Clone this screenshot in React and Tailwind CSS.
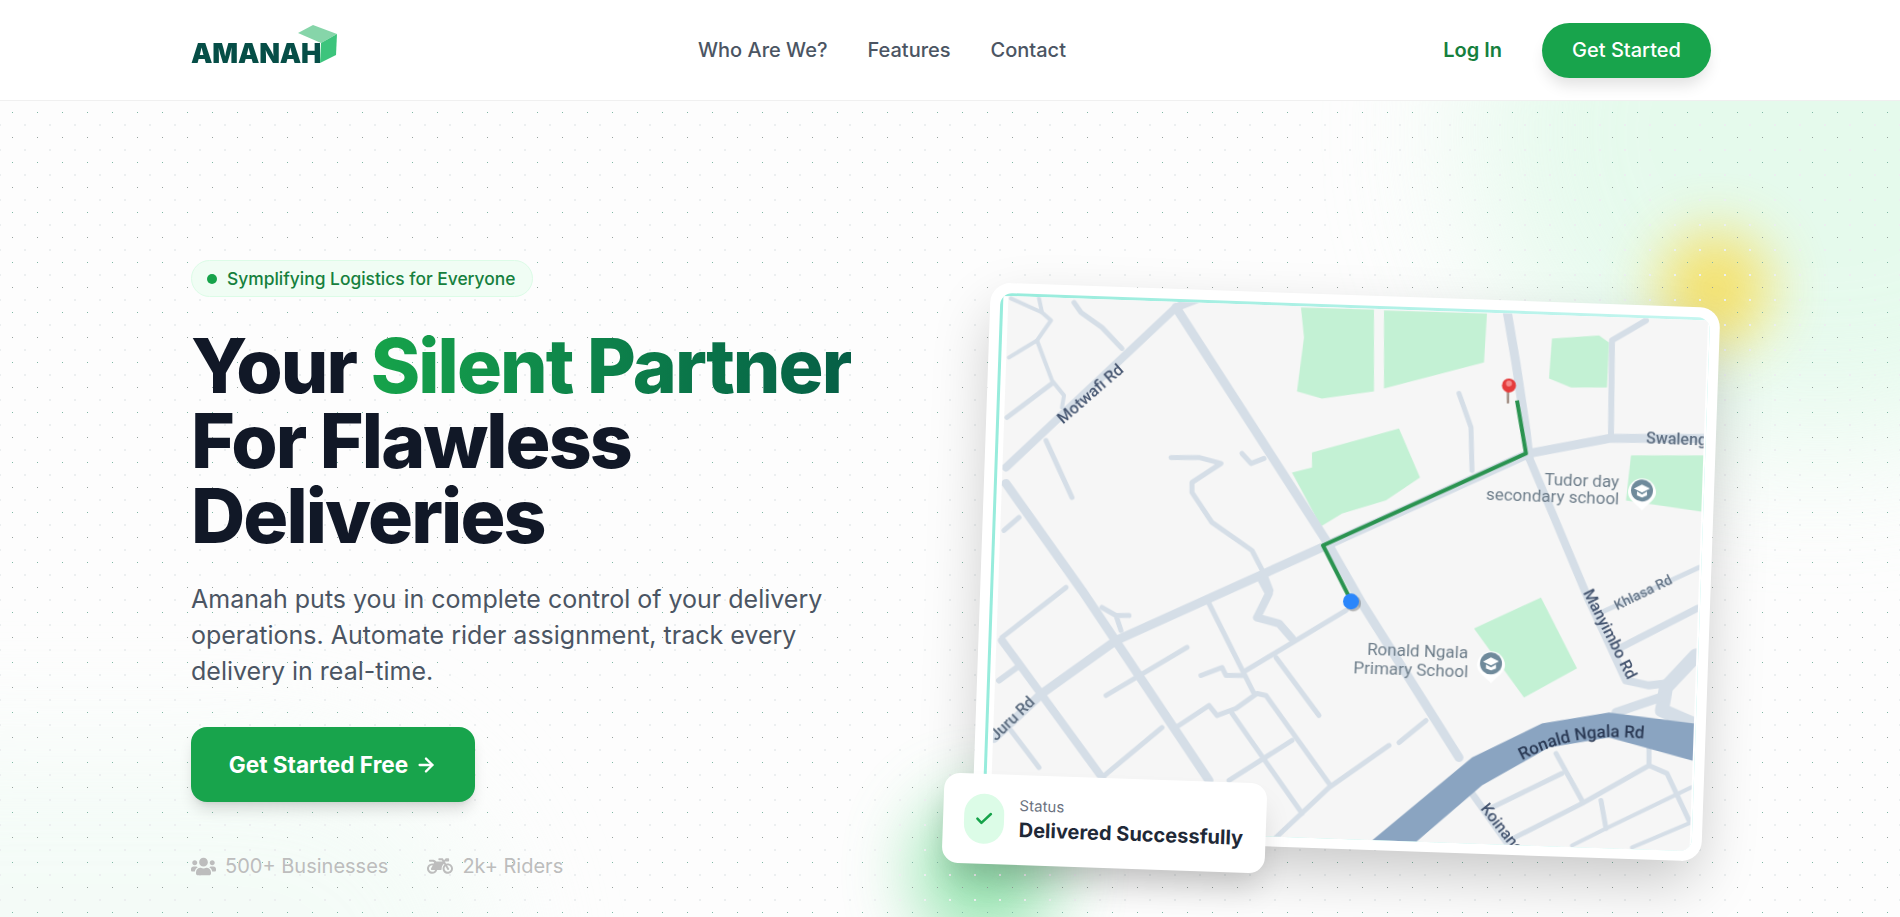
import { ArrowRight, Check } from "lucide-react";
import { FaUsers, FaMotorcycle } from "react-icons/fa";

// map drawing, all points are page coordinates of the picture
const roads = [
  { w: 9, d: "M1177 307L1327 540L1363 603L1460 757" },
  { w: 7, d: "M1473 793L1510 845" },
  { w: 8, d: "M1200 298L1177 307L1007 467" },
  { w: 9, d: "M1705 438L1610 438L1530 453L1323 547L1117 640L1043 693L995 738" },
  { w: 9, d: "M1007 483L1083 590L1210 780" },
  { w: 8, d: "M1003 640L1103 777" },
  { w: 5, d: "M1003 637L1067 587" },
  { w: 6, d: "M1000 680L1018 667" },
  { w: 5, d: "M1012 730L1040 767" },
  { w: 5, d: "M1103 777L1163 727" },
  { w: 5, d: "M1177 727L1210 705L1218 715L1237 708L1258 693L1267 695L1330 783" },
  { w: 5, d: "M1107 695L1188 647" },
  { w: 5, d: "M1233 713L1303 813" },
  { w: 5, d: "M1230 780L1293 740" },
  { w: 5, d: "M1277 837L1330 787L1390 745" },
  { w: 5, d: "M1400 742L1427 720" },
  { w: 5, d: "M1210 603L1255 693" },
  { w: 5, d: "M1247 670L1347 610" },
  { w: 5, d: "M1277 657L1320 715" },
  { w: 5, d: "M1202 675L1223 667L1227 675L1245 675" },
  { w: 5, d: "M1103 607L1117 615L1122 630M1117 615L1130 615" },
  { w: 8, d: "M1263 580L1270 593L1258 617L1280 623L1293 638" },
  { w: 5, d: "M1172 457L1200 457L1222 463L1193 482L1193 492L1213 522L1253 550L1267 577L1272 590" },
  { w: 5, d: "M1243 453L1252 463L1265 458" },
  { w: 4, d: "M1012 298L1043 312L1052 320L1038 340L1010 357" },
  { w: 4, d: "M1038 340L1053 380L1065 395L1063 407" },
  { w: 5, d: "M1053 383L1008 417" },
  { w: 5, d: "M1075 302L1082 312L1103 327L1123 348" },
  { w: 4, d: "M1040 298L1043 312" },
  { w: 5, d: "M1047 440L1073 497" },
  { w: 5, d: "M1020 517L1005 530" },
  { w: 9, d: "M1508 310L1517 363L1527 430L1530 457" },
  { w: 8, d: "M1530 457L1590 600L1627 680L1650 685L1667 683" },
  { w: 5, d: "M1460 393L1472 427L1473 470" },
  { w: 6, d: "M1647 320L1613 340L1612 433" },
  { w: 5, d: "M1700 567L1600 613" },
  { w: 7, d: "M1698 608L1620 648" },
  { w: 14, d: "M1697 655L1667 687L1663 710L1693 723" },
  { w: 9, d: "M1667 695L1617 712" },
  { w: 5, d: "M1493 807L1563 773" },
  { w: 5, d: "M1557 753L1583 800" },
  { w: 5, d: "M1510 840L1583 803L1650 765L1650 747" },
  { w: 5, d: "M1650 765L1668 773L1690 820" },
  { w: 5, d: "M1602 800L1607 828" },
  { w: 4, d: "M1573 845L1607 828L1692 787" },
  { w: 4, d: "M1633 847L1692 822" },
];

const parks = [
  "1302,307 1305,337 1298,391 1323,398 1375,391 1375,309",
  "1385,310 1488,313 1485,362 1385,388",
  "1293,472 1313,467 1313,452 1400,428 1421,477 1387,500 1343,513 1322,526",
  "1553,338 1600,335 1610,342 1608,387 1572,387 1550,378",
  "1632,455 1710,455 1708,512 1627,500",
  "1475,628 1542,597 1578,668 1525,697",
];

function SchoolPin({ x, y }) {
  return (
    <g transform={`translate(${x} ${y})`}>
      <path d="M-14 2A14 14 0 1 1 14 2C14 9 6 13 0 20C-6 13 -14 9 -14 2Z" fill="#ffffff" />
      <circle cy="0" r="11" fill="#6f8a9b" />
      <path d="M-8 -2L0 -6L8 -2L0 2Z" fill="#ffffff" />
      <path d="M-5 1L0 4L5 1L5 5L0 7L-5 5Z" fill="#ffffff" />
    </g>
  );
}

function MapDrawing() {
  return (
    <svg width="700" height="531" className="block bg-[#f6f6f6] blur-[0.7px]">
      <g transform="translate(346 264) rotate(-2) translate(-1346 -571.5)">
        {parks.map((p) => (
          <polygon key={p} points={p} fill="#c3f1d4" />
        ))}
        {roads.map((r) => (
          <path key={r.d} d={r.d} fill="none" stroke="#d5dee7" strokeWidth={r.w} strokeLinejoin="round" strokeLinecap="round" />
        ))}
        <polygon points="1367,845 1413,845 1483,785 1550,747 1610,737 1700,762 1702,724 1610,712 1543,723 1473,757" fill="#8aa4c1" />
        <path d="M1518 400L1527 453L1324 545L1352 600" fill="none" stroke="#2a9350" strokeWidth="4" strokeLinejoin="round" />

        <g fontFamily="Roboto, sans-serif" fontSize="16" fontWeight="500">
          <text transform="translate(1064 424) rotate(-41)" fill="#44546f">Motwafi Rd</text>
          <text transform="translate(1647 443) rotate(2)" fill="#5d6d80">Swalengo</text>
          <text transform="translate(1584 592) rotate(63)" fill="#44546f">Manyimbo Rd</text>
          <text transform="translate(1618 610) rotate(-26)" fontSize="14" fill="#667688">Khlasa Rd</text>
          <text transform="translate(1481 808) rotate(52)" fill="#44546f">Koinange</text>
          <text transform="translate(997 741) rotate(-44)" fill="#5d6d80">Juru Rd</text>
          <path id="ngala-road" d="M1523 760C1563 738 1603 733 1653 739" fill="none" />
          <text fill="#2b3a55" fontSize="17">
            <textPath href="#ngala-road">Ronald Ngala Rd</textPath>
          </text>
        </g>

        <g fontFamily="Roboto, sans-serif" fontSize="17" fill="#6d7d8a" textAnchor="end">
          <text transform="translate(1620 487) rotate(2)">Tudor day</text>
          <text transform="translate(1620 504) rotate(2)">secondary school</text>
          <text transform="translate(1469 658) rotate(2)">Ronald Ngala</text>
          <text transform="translate(1469 677) rotate(2)">Primary School</text>
        </g>
        <SchoolPin x={1643} y={490} />
        <SchoolPin x={1492} y={663} />

        <path d="M1509 388L1509 403" stroke="#a39086" strokeWidth="2.5" />
        <circle cx="1510" cy="385" r="7" fill="#e53b3b" />
        <circle cx="1510" cy="383" r="3" fill="#f58a8a" />

        <circle cx="1354" cy="603" r="8" fill="#000000" opacity="0.25" />
        <circle cx="1352" cy="601" r="8" fill="#2b86fb" />
      </g>
    </svg>
  );
}

export default function App() {
  return (
    <div className="h-[917px] overflow-hidden bg-white font-['Inter',sans-serif]">
      <header className="h-[101px] border-b border-[#f0f0f0] bg-white">
        <div className="ml-[191px] flex h-full w-[1520px] items-center">
          <a href="#" className="relative flex h-[100px] w-[160px] items-center blur-[0.3px]">
            <span className="mt-[6px] text-[27px] font-black leading-none tracking-[-0.2px] text-[#064e47]">AMANAH</span>
            <svg width="50" height="50" viewBox="0 0 50 50" className="absolute left-[104px] top-[20px]">
              <polygon points="3,13 18,5 42,14 26,23" fill="#86d5a9" />
              <polygon points="26,23 42,14 41,35 25,43" fill="#3cc47c" />
            </svg>
          </a>
          <nav className="ml-[347px] flex gap-10 text-[20px] font-medium text-[#4b5563]">
            <a href="#">Who Are We?</a>
            <a href="#">Features</a>
            <a href="#">Contact</a>
          </nav>
          <div className="ml-auto flex items-center gap-10 text-[20px]">
            <a href="#" className="font-semibold text-[#15803d]">Log In</a>
            <a href="#" className="flex h-[55px] w-[169px] items-center justify-center rounded-full bg-[#18a44c] font-medium text-white shadow-[0_10px_15px_-3px_rgba(0,0,0,0.12)]">
              Get Started
            </a>
          </div>
        </div>
      </header>

      <section className="relative h-[816px] overflow-hidden bg-[#fdfdfd]">
        {/* soft colour patches behind the dots */}
        <div className="absolute left-[1470px] top-[-280px] h-[620px] w-[700px] rounded-full bg-[#dcf9e6] opacity-70 blur-[70px]" />
        <div className="absolute left-[-300px] top-[640px] h-[460px] w-[800px] rounded-full bg-[#effbf4] opacity-60 blur-[60px]" />
        <div className="absolute left-[1660px] top-[130px] h-[115px] w-[110px] rounded-full bg-[#f8db4e] opacity-80 blur-[28px]" />
        <div className="absolute left-[915px] top-[695px] h-[150px] w-[140px] rounded-full bg-[#6fdc93] opacity-70 blur-[35px]" />
        <div className="absolute inset-0 [background-image:radial-gradient(circle_at_12px_12px,#eceff0_1.3px,transparent_1.4px),radial-gradient(circle_at_12.5px_12.5px,#7fb8a6_0.7px,transparent_0.8px),radial-gradient(circle_at_12.5px_12.5px,#98a39f_0.7px,transparent_0.8px)] [background-size:25px_25px,25px_50px,25px_50px] [background-position:13px_12px,0px_-1px,0px_24px]" />

        <div className="relative ml-[191px] grid w-[1520px] grid-cols-2 items-center gap-16 pt-[159px]">
          <div>
            <div className="inline-flex h-[37px] items-center gap-[10px] rounded-full border border-[#dcfce7] bg-[#f0fdf4] pl-[15px] pr-[17px] pt-[1px] text-[17.4px] font-medium text-[#15803d]">
              <span className="h-[10px] w-[10px] rounded-full bg-[#16a34a]" />
              Symplifying Logistics for Everyone
            </div>
            <h1 className="mt-[31px] text-[75px] font-extrabold leading-[75px] tracking-[-1.9px] text-[#111827]">
              Your{" "}
              <span className="bg-gradient-to-r from-[#16a34a] to-[#065f46] bg-clip-text text-transparent">Silent Partner</span>
              <br />
              For Flawless
              <br />
              Deliveries
            </h1>
            <p className="mt-[28px] w-[650px] text-[25px] leading-[36px] text-[#4b5563]">
              Amanah puts you in complete control of your delivery operations. Automate rider assignment, track every delivery in real-time.
            </p>
            <a href="#" className="mt-[38px] flex h-[75px] w-[284px] items-center justify-center gap-[7px] rounded-2xl bg-[#18a44c] text-[22.6px] font-bold text-white shadow-[0_10px_15px_-3px_rgba(0,0,0,0.14),0_4px_6px_-4px_rgba(0,0,0,0.1)]">
              Get Started Free
              <ArrowRight size={22} strokeWidth={2.5} />
            </a>
            <div className="mt-[49px] flex h-[30px] items-center gap-[39px] text-[20px] text-[#bdbdbd]">
              <span className="flex items-center gap-[9px]">
                <FaUsers size={25} />
                500+ Businesses
              </span>
              <span className="flex items-center gap-[9px]">
                <FaMotorcycle size={26} />
                2k+ Riders
              </span>
            </div>
          </div>

          <div className="relative ml-[-2px] mt-[2px]">
            <div className="h-[554px] rotate-[2deg] rounded-[20px] bg-white p-[10px] shadow-[0_25px_60px_-5px_rgba(0,0,0,0.22)]">
              <div className="h-full overflow-hidden rounded-xl bg-gradient-to-r from-[#97ecdc] to-[#c5f6f0] pl-[3px] pt-[3px]">
                <div className="h-full bg-white pl-[5px]">
                  <MapDrawing />
                </div>
              </div>
            </div>
            <div className="absolute left-[-38px] top-[483px] flex h-[90px] w-[323px] rotate-[2deg] items-center gap-[15px] rounded-2xl bg-white pl-[21px] shadow-[0_20px_30px_-5px_rgba(0,0,0,0.15)]">
              <div className="flex h-[50px] w-[40px] shrink-0 items-center justify-center rounded-full bg-[#dcfce7]">
                <Check size={20} strokeWidth={3} className="text-[#16a34a]" />
              </div>
              <div className="whitespace-nowrap">
                <div className="text-[15px] leading-5 text-[#6b7280]">Status</div>
                <div className="text-[20px] font-bold leading-7 text-[#1f2937]">Delivered Successfully</div>
              </div>
            </div>
          </div>
        </div>
      </section>
    </div>
  );
}
